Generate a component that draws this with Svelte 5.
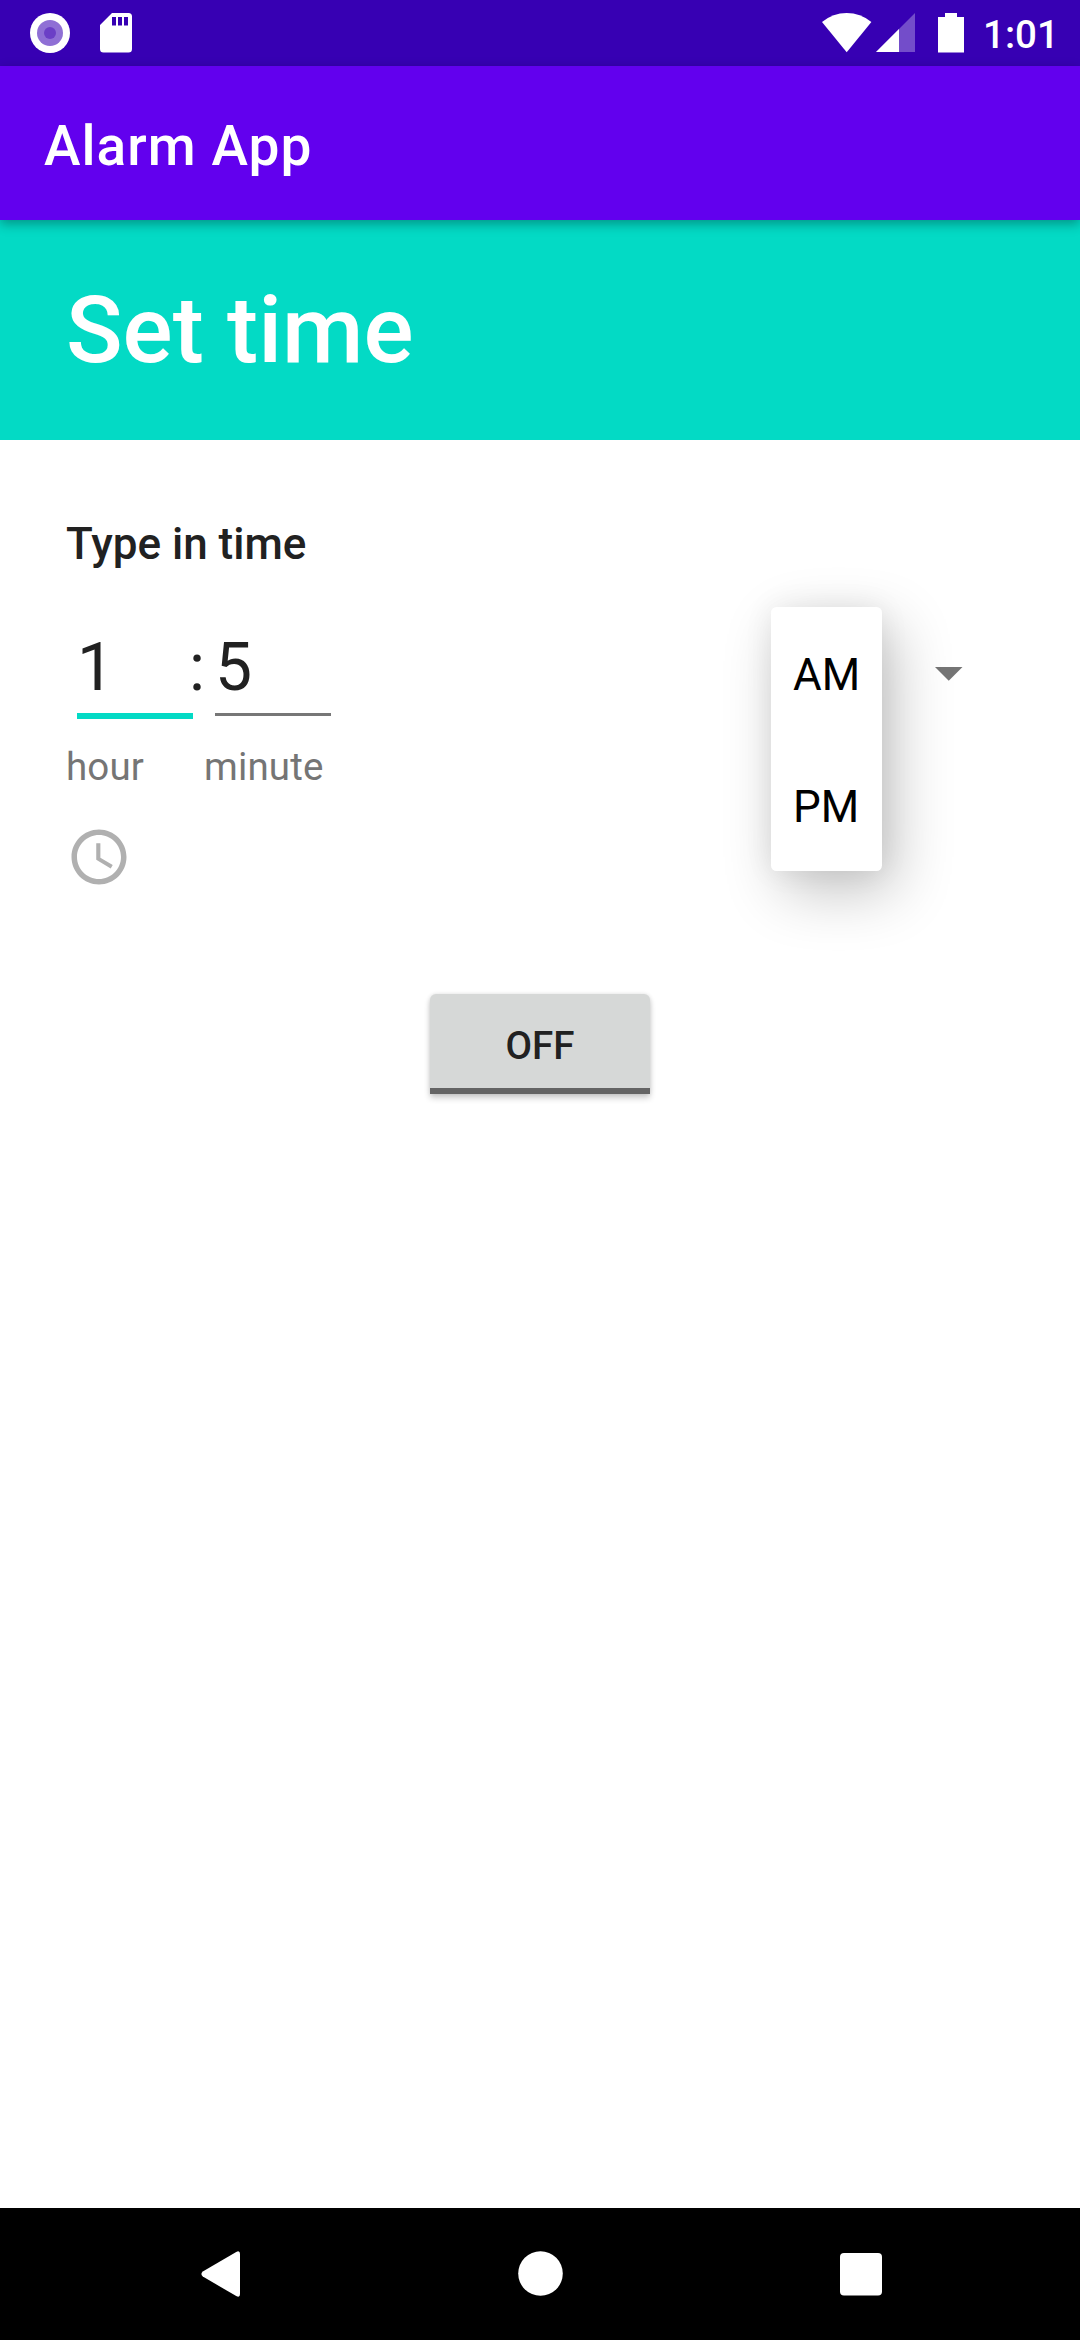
<script>
  let hour = $state('1');
  let minute = $state('5');
  const periods = ['AM', 'PM'];
  let period = $state('AM');
  let on = $state(false);
</script>

<div class="screen">
  <div class="status">
    <svg class="ring" width="40" height="40" viewBox="0 0 40 40">
      <circle cx="20" cy="20" r="20" fill="#fff" />
      <circle cx="20" cy="20" r="13" fill="#8f6fd5" />
      <circle cx="20" cy="20" r="6" fill="#6b3fc6" />
    </svg>
    <svg class="card" width="32" height="40" viewBox="0 0 32 40">
      <path fill="#fff" fill-rule="evenodd" d="M12 0H28.5Q32 0 32 3.5V36Q32 39.5 28.5 39.5H3.5Q0 39.5 0 36V12ZM12 4V12.5H16V4ZM18 4V12.5H22V4ZM24 4V12.5H28V4Z" />
    </svg>
    <div class="gap"></div>
    <svg class="wifi" width="50" height="40" viewBox="0 0 50 40">
      <path fill="#fff" d="M0 9Q11 0 24.7 0T49.4 9L24.7 39.2Z" />
    </svg>
    <svg class="signal" width="39" height="40" viewBox="0 0 39 40">
      <path fill="#fff" fill-opacity=".3" d="M39 0V39H0Z" />
      <path fill="#fff" d="M23 16V39H0Z" />
    </svg>
    <svg class="battery" width="26" height="40" viewBox="0 0 26 40">
      <path fill="#fff" d="M7 0H19V4H26V39.6H0V4H7Z" />
    </svg>
    <span class="clock">1:01</span>
  </div>

  <header class="toolbar"><span>Alarm App</span></header>
  <div class="banner"><h1>Set time</h1></div>

  <main>
    <h2>Type in time</h2>
    <div class="row">
      <div class="fields">
        <div class="field active">{hour}</div>
        <span class="colon">:</span>
        <div class="field">{minute}</div>
      </div>
      <div class="spinner">
        <svg class="caret" width="28" height="14" viewBox="0 0 28 14">
          <path fill="#757575" d="M0 0H27.5L13.75 13.75Z" />
        </svg>
        <div class="popup">
          {#each periods as p}
            <button class="option" onclick={() => (period = p)}>{p}</button>
          {/each}
        </div>
      </div>
    </div>
    <div class="labels"><span class="hour">hour</span><span>minute</span></div>
    <svg class="schedule" width="66" height="66" viewBox="0 0 24 24" fill="#b0b0b0">
      <path d="M11.99 2C6.47 2 2 6.48 2 12s4.47 10 9.99 10C17.52 22 22 17.52 22 12S17.52 2 11.99 2zM12 20c-4.42 0-8-3.58-8-8s3.58-8 8-8 8 3.58 8 8-3.58 8-8 8z" />
      <path d="M12.5 7H11v6l5.25 3.15.75-1.23-4.5-2.67z" />
    </svg>
    <button class="toggle" onclick={() => (on = !on)}>{on ? 'ON' : 'OFF'}</button>
  </main>

  <nav>
    <svg width="40" height="46" viewBox="0 0 40 46">
      <path fill="#fff" d="M35.2.9Q39 -1 39 3V43Q39 47 35.2 45L1.8 25.6Q-1 23 1.8 20.4Z" />
    </svg>
    <svg width="46" height="46" viewBox="0 0 46 46"><circle cx="22.5" cy="22.5" r="22.3" fill="#fff" /></svg>
    <svg width="42" height="43" viewBox="0 0 42 43"><rect width="42" height="42.5" rx="4" fill="#fff" /></svg>
  </nav>
</div>

<style>
  :global(body) {
    margin: 0;
    background: #fff;
  }
  .screen {
    width: 1080px;
    height: 2340px;
    display: flex;
    flex-direction: column;
    overflow: hidden;
    background: #fff;
    font-family: Roboto, sans-serif;
    color: #212121;
  }
  svg {
    display: block;
    flex: none;
  }
  button {
    border: 0;
    font-family: inherit;
    cursor: pointer;
  }
  .status {
    box-sizing: border-box;
    height: 66px;
    flex: none;
    display: flex;
    align-items: center;
    padding: 0 24px 0 30px;
    background: #3700b3;
    color: #fff;
  }
  .card {
    margin-left: 30px;
  }
  .gap {
    flex: 1;
  }
  .signal {
    margin-left: 4px;
  }
  .battery {
    margin: 0 19px 0 23px;
  }
  .clock {
    width: 73px;
    font-size: 38.5px;
    font-weight: 500;
    line-height: 46px;
    padding-top: 3px;
  }
  .toolbar {
    height: 154px;
    flex: none;
    display: flex;
    align-items: center;
    padding: 0 44px;
    background: #6200ee;
    box-shadow: 0 4px 11px rgba(0, 0, 0, 0.32);
    color: #fff;
    z-index: 1;
  }
  .toolbar span {
    font-size: 55px;
    font-weight: 500;
    line-height: 64px;
    padding-top: 6px;
    letter-spacing: 1.05px;
  }
  .banner {
    height: 220px;
    flex: none;
    background: #03dac5;
    color: #fff;
  }
  h1 {
    margin: 0;
    padding: 55px 66px 0;
    font-size: 93.5px;
    font-weight: 500;
    line-height: 110px;
  }
  main {
    flex: 1;
    display: flex;
    flex-direction: column;
    padding: 78px 66px 0;
  }
  h2 {
    margin: 0;
    font-size: 44px;
    font-weight: 500;
    line-height: 52px;
  }
  .row {
    display: flex;
    justify-content: space-between;
    height: 149px;
  }
  .fields {
    display: flex;
    align-items: flex-start;
    padding: 58px 0 0 11px;
    font-size: 66px;
    line-height: 80px;
  }
  .field {
    width: 116px;
    padding-bottom: 5px;
    border-bottom: 3px solid #777;
  }
  .field.active {
    border-bottom: 6px solid #03dac5;
  }
  .colon {
    width: 26px;
    margin: 0 0 0 -4px;
  }
  .spinner {
    position: relative;
    width: 243px;
    padding-top: 97px;
  }
  .caret {
    margin-left: 164px;
  }
  .popup {
    position: absolute;
    left: 0;
    top: 37px;
    width: 111px;
    height: 264px;
    display: flex;
    flex-direction: column;
    border-radius: 5.5px;
    background: #fff;
    box-shadow: 12px 20px 60px rgba(0, 0, 0, 0.24), 0 0 30px rgba(0, 0, 0, 0.07);
  }
  .option {
    height: 132px;
    padding: 3px 0 0 22px;
    background: transparent;
    color: #000;
    font-size: 44px;
    text-align: left;
  }
  .labels {
    display: flex;
    height: 46px;
    margin-top: 25px;
    font-size: 38.5px;
    line-height: 46px;
    letter-spacing: 0.15px;
    color: #757575;
  }
  .hour {
    width: 138px;
  }
  .schedule {
    margin-top: 34px;
  }
  .toggle {
    box-sizing: border-box;
    align-self: center;
    width: 220px;
    height: 100px;
    margin-top: 104px;
    padding: 8px 0 0;
    border-bottom: 6px solid #646464;
    border-radius: 6px 6px 0 0;
    background: #d6d8d7;
    box-shadow: 0 4px 6px rgba(0, 0, 0, 0.2), 0 0 4px rgba(0, 0, 0, 0.1);
    color: #212121;
    font-size: 38.5px;
    font-weight: 500;
  }
  nav {
    box-sizing: border-box;
    height: 132px;
    flex: none;
    display: flex;
    align-items: center;
    justify-content: space-between;
    padding: 0 198px 0 201px;
    background: #000;
  }
</style>
